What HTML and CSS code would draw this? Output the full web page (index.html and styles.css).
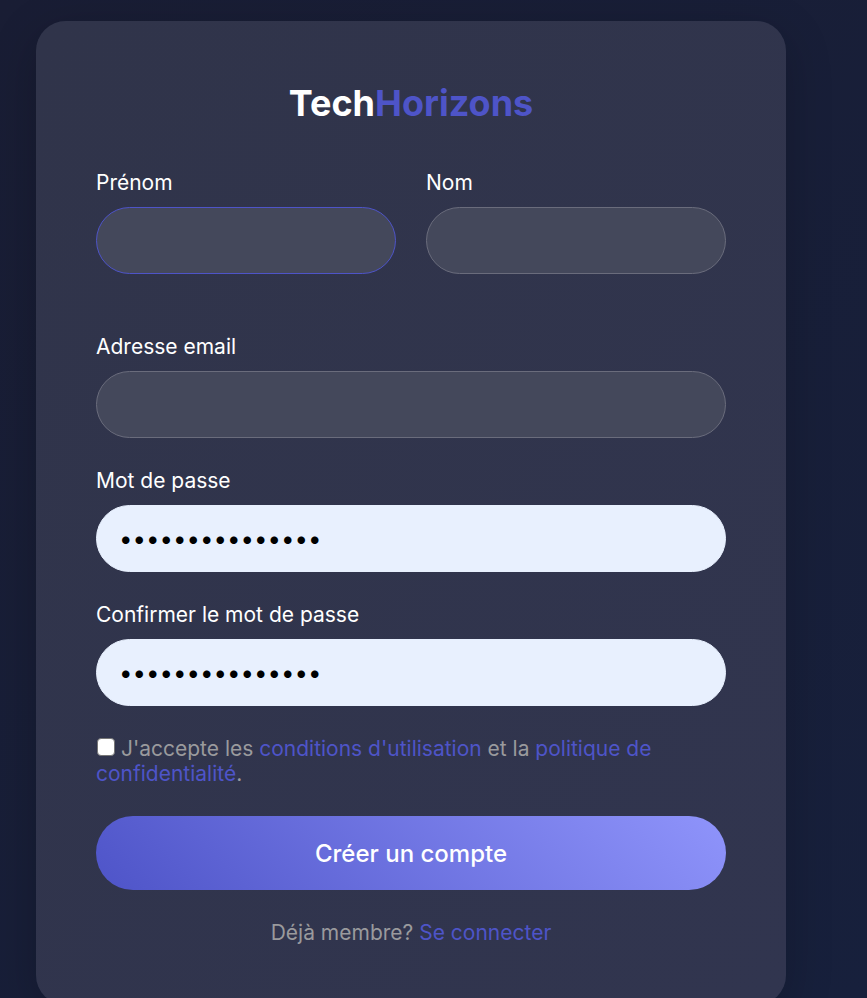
FILE: index.html
```html
<!DOCTYPE html>
<html lang="fr">
<head>
<meta charset="utf-8">
<meta name="viewport" content="width=device-width, initial-scale=1">
<title>TechHorizons</title>
<link rel="stylesheet" href="styles.css">
</head>
<body>
<main class="card">
  <h1 class="logo">Tech<span>Horizons</span></h1>
  <form>
    <div class="row">
      <div class="field">
        <label for="first">Prénom</label>
        <input class="active" type="text" id="first">
      </div>
      <div class="field">
        <label for="last">Nom</label>
        <input type="text" id="last">
      </div>
    </div>
    <div class="field">
      <label for="email">Adresse email</label>
      <input type="email" id="email">
    </div>
    <div class="field">
      <label for="password">Mot de passe</label>
      <input class="filled" type="password" id="password" value="motdepasse12345">
    </div>
    <div class="field">
      <label for="confirm">Confirmer le mot de passe</label>
      <input class="filled" type="password" id="confirm" value="motdepasse12345">
    </div>
    <div class="terms">
      <input type="checkbox" id="terms">
      <label for="terms">J'accepte les <a href="#">conditions d'utilisation</a> et la <a href="#">politique de confidentialité</a>.</label>
    </div>
    <button type="submit">Créer un compte</button>
  </form>
  <p class="login">Déjà membre? <a href="#">Se connecter</a></p>
</main>
</body>
</html>
```
FILE: styles.css
```css
* {
  box-sizing: border-box;
  margin: 0;
  padding: 0;
}

body {
  min-height: 100vh;
  padding: 21px 81px 0 36px;
  overflow: hidden;
  background: linear-gradient(135deg, #191d34, #17203c);
  color: #fff;
  font-family: Inter, sans-serif;
  font-size: 21px;
  line-height: 25px;
}

.card {
  padding: 60px;
  border-radius: 30px;
  background: linear-gradient(135deg, #30344a, #31354f);
  box-shadow: 0 12px 48px rgba(0, 0, 0, 0.2);
}

.logo {
  margin-bottom: 45px;
  font-size: 36px;
  font-weight: 700;
  line-height: 44px;
  text-align: center;
}

.logo span,
a {
  color: #4e54c8;
}

a {
  text-decoration: none;
}

.row {
  display: grid;
  grid-template-columns: 1fr 1fr;
  gap: 30px;
  margin-bottom: 30px;
}

.field {
  margin-bottom: 30px;
}

.field label {
  display: block;
  margin-bottom: 12px;
}

.field input {
  display: block;
  width: 100%;
  height: 67px;
  padding: 0 22px;
  border: 1px solid #6a6c7c;
  border-radius: 34px;
  outline: none;
  background: #44485b;
  color: #fff;
  font-family: inherit;
  font-size: 24px;
}

.field input.active {
  border-color: #4e54c8;
}

.field input.filled {
  border-color: #e8f0fe;
  background: #e8f0fe;
  color: #000;
}

.terms {
  margin-bottom: 30px;
  color: #9a9a9d;
}

.terms input {
  width: 18px;
  height: 18px;
  margin-left: 1px;
  border: 1px solid #767676;
  border-radius: 4px;
  background: #fff;
  appearance: none;
  vertical-align: baseline;
}

.terms input:checked {
  background: #4e54c8;
}

button {
  display: block;
  width: 100%;
  height: 74px;
  border: 0;
  border-radius: 37px;
  background: linear-gradient(45deg, #4e54c8, #8f94fb);
  color: #fff;
  font-family: inherit;
  font-size: 24px;
  font-weight: 500;
}

.login {
  margin-top: 30px;
  color: #9a9a9d;
  text-align: center;
}
```
